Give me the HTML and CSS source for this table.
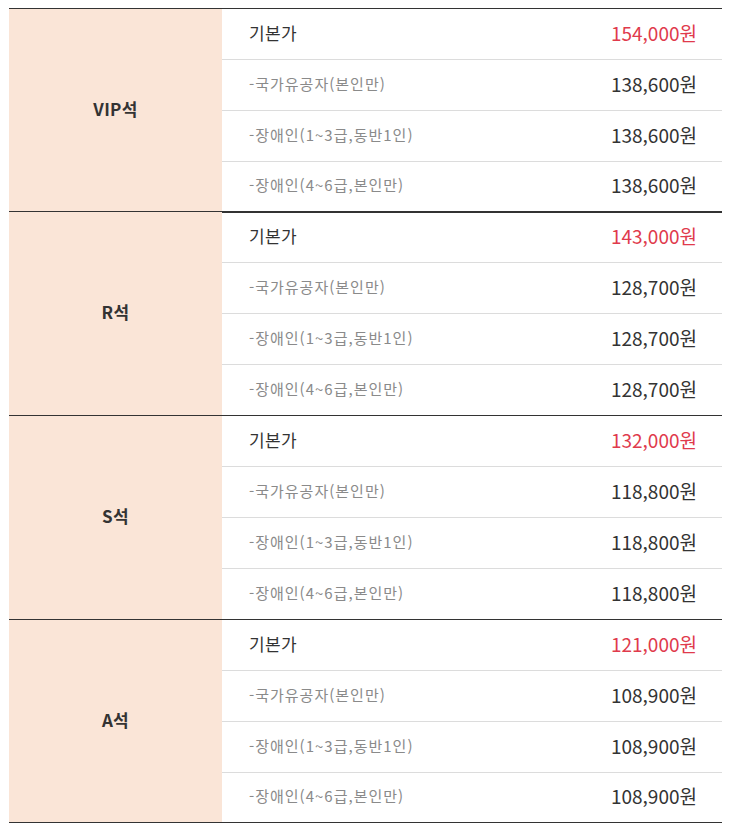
FILE: index.html
```html
<!DOCTYPE html>
<html lang="ko">
<head>
<meta charset="utf-8">
<link rel="stylesheet" href="styles.css">
</head>
<body>
<div class="price-table">
  <div class="group">
    <div class="seat">VIP석</div>
    <div class="rows">
      <div class="row"><span class="label main">기본가</span><span class="price red">154,000원</span></div>
      <div class="row"><span class="label">-국가유공자(본인만)</span><span class="price">138,600원</span></div>
      <div class="row"><span class="label">-장애인(1~3급,동반1인)</span><span class="price">138,600원</span></div>
      <div class="row"><span class="label">-장애인(4~6급,본인만)</span><span class="price">138,600원</span></div>
    </div>
  </div>
  <div class="group">
    <div class="seat">R석</div>
    <div class="rows">
      <div class="row"><span class="label main">기본가</span><span class="price red">143,000원</span></div>
      <div class="row"><span class="label">-국가유공자(본인만)</span><span class="price">128,700원</span></div>
      <div class="row"><span class="label">-장애인(1~3급,동반1인)</span><span class="price">128,700원</span></div>
      <div class="row"><span class="label">-장애인(4~6급,본인만)</span><span class="price">128,700원</span></div>
    </div>
  </div>
  <div class="group">
    <div class="seat">S석</div>
    <div class="rows">
      <div class="row"><span class="label main">기본가</span><span class="price red">132,000원</span></div>
      <div class="row"><span class="label">-국가유공자(본인만)</span><span class="price">118,800원</span></div>
      <div class="row"><span class="label">-장애인(1~3급,동반1인)</span><span class="price">118,800원</span></div>
      <div class="row"><span class="label">-장애인(4~6급,본인만)</span><span class="price">118,800원</span></div>
    </div>
  </div>
  <div class="group">
    <div class="seat">A석</div>
    <div class="rows">
      <div class="row"><span class="label main">기본가</span><span class="price red">121,000원</span></div>
      <div class="row"><span class="label">-국가유공자(본인만)</span><span class="price">108,900원</span></div>
      <div class="row"><span class="label">-장애인(1~3급,동반1인)</span><span class="price">108,900원</span></div>
      <div class="row"><span class="label">-장애인(4~6급,본인만)</span><span class="price">108,900원</span></div>
    </div>
  </div>
</div>
</body>
</html>
```

FILE: styles.css
```css
html, body {
  margin: 0;
  padding: 0;
  background: #fff;
}

body {
  font-family: "Noto Sans CJK KR", "Noto Sans", sans-serif;
  color: #333;
}

.price-table {
  margin: 8px 0 0 9px;
  width: 713px;
  border-top: 1px solid #333;
}

.group {
  display: flex;
}

.seat {
  width: 213px;
  flex: none;
  box-sizing: border-box;
  background: #fae5d7;
  border-bottom: 1px solid #333;
  padding-bottom: 4px;
  display: flex;
  align-items: center;
  justify-content: center;
  font-size: 17px;
  font-weight: 700;
  color: #333;
  letter-spacing: 0.3px;
}

.rows {
  flex: 1;
}

.row {
  box-sizing: border-box;
  height: 51px;
  border-bottom: 1px solid #dcdcdc;
  display: flex;
  align-items: center;
  justify-content: space-between;
  padding: 0 25px 4px 27px;
}

.rows .row:last-child {
  border-bottom-color: #333;
}

.group:first-child .row:last-child,
.group:last-child .row:last-child {
  height: 50px;
}

.group:nth-child(2) .row:first-child {
  border-top: 1px solid #333;
}

.label {
  font-size: 15px;
  color: #8a8a8a;
  letter-spacing: 1px;
}

.label.main {
  font-size: 17px;
  color: #333;
  letter-spacing: 0.3px;
}

.price {
  font-size: 19px;
  color: #333;
}

.price.red {
  color: #e03a4c;
}
```
